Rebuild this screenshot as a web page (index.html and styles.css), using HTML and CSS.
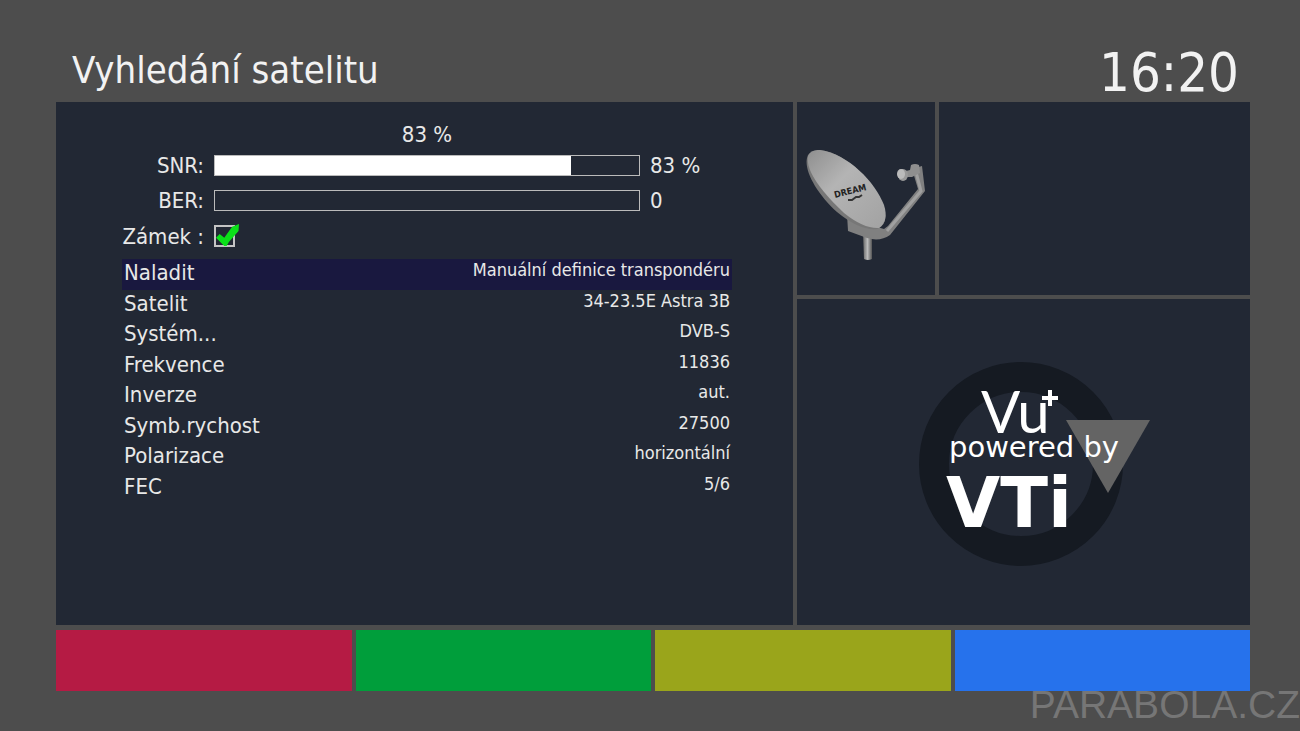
FILE: index.html
```
<!DOCTYPE html>
<html lang="cs">
<head>
<meta charset="utf-8">
<title>Vyhledání satelitu</title>
<meta name="viewport" content="width=device-width">
<link rel="stylesheet" href="styles.css">
</head>
<body>

<header>
	<h1>Vyhledání satelitu</h1>
	<time>16:20</time>
</header>

<main>
	<section class="panel tuner">
		<div class="signal">
			<span class="percent">83 %</span>
			<label for="snr">SNR:</label>
			<progress id="snr" value="84" max="100"></progress>
			<span>83 %</span>
			<label for="ber">BER:</label>
			<progress id="ber" value="0" max="100"></progress>
			<span>0</span>
			<label for="lock">Zámek :</label>
			<input type="checkbox" id="lock" checked>
		</div>
		<table class="settings">
			<tr class="selected"><th>Naladit</th><td>Manuální definice transpondéru</td></tr>
			<tr><th>Satelit</th><td>34-23.5E Astra 3B</td></tr>
			<tr><th>Systém...</th><td>DVB-S</td></tr>
			<tr><th>Frekvence</th><td>11836</td></tr>
			<tr><th>Inverze</th><td>aut.</td></tr>
			<tr><th>Symb.rychost</th><td>27500</td></tr>
			<tr><th>Polarizace</th><td>horizontální</td></tr>
			<tr><th>FEC</th><td>5/6</td></tr>
		</table>
	</section>

	<div class="side">
		<div class="panel dish">
			<svg width="122" height="114" viewBox="0 0 122 114">
				<defs>
					<linearGradient id="plate" x1="0" y1="0" x2="1" y2="1">
						<stop offset="0" stop-color="#8f8f8f"/>
						<stop offset=".4" stop-color="#b4b4b4"/>
						<stop offset="1" stop-color="#a2a2a2"/>
					</linearGradient>
					<linearGradient id="pole">
						<stop offset="0" stop-color="#666"/>
						<stop offset=".5" stop-color="#bbb"/>
						<stop offset="1" stop-color="#555"/>
					</linearGradient>
				</defs>
				<path d="M58 84h9v26q-4 2-8 0z" fill="url(#pole)"/>
				<path d="M42 65L47 71L79 80L83 77L113 40L107 20L117 17L120 42L85 86Q75 93 62 89L43 82Z" fill="#808080"/>
				<path d="M82 82L116 42L111 23" fill="none" stroke="#a0a0a0" stroke-width="3"/>
				<path d="M106 16q4-2 8 0l1 8-8 4-9 0-1-5 8-2z" fill="#8f8f8f"/>
				<ellipse cx="98" cy="26" rx="5" ry="6" fill="#999"/>
				<ellipse cx="96" cy="25" rx="4" ry="5" fill="#bbb"/>
				<path d="M2 9C-1 22 12 45 32 63Q55 82 72 80Q82 77 80 63C76 39 43 3 14 1Q3 2 2 9Z" fill="#777"/>
				<path d="M3 7C0 23 20 46 39 64Q59 80 74 79Q84 72 79 56C70 33 43 5 15 1Q6 0 3 7Z" fill="url(#plate)"/>
				<text class="brand" x="30" y="49" transform="rotate(-14 30 49)">DREAM</text>
				<path d="M43 51l4 0 4-3 3 0 3-2" fill="none" stroke="#333" stroke-width="2"/>
			</svg>
		</div>
		<div class="panel preview"></div>
		<div class="panel logo">
			<svg width="232" height="206" viewBox="0 0 232 206">
				<circle cx="102" cy="103" r="87" fill="none" stroke="#151a22" stroke-width="30"/>
				<path d="M147 59H231L189 132Z" fill="#646464"/>
				<text class="vu" x="62" y="72">Vu</text>
				<path d="M131 29v16M123 37h16" fill="none" stroke="#fff" stroke-width="4"/>
				<text class="powered" x="30" y="96">powered by</text>
				<text class="vti" x="27" y="166">VTi</text>
			</svg>
		</div>
	</div>
</main>

<footer>
	<button class="red" aria-label="Červené"></button>
	<button class="green" aria-label="Zelené"></button>
	<button class="yellow" aria-label="Žluté"></button>
	<button class="blue" aria-label="Modré"></button>
</footer>

<div class="watermark">PARABOLA.CZ</div>

</body>
</html>
```
FILE: styles.css
```
* {
	box-sizing: border-box;
}
body {
	margin: 0;
	padding: 0 50px 40px 56px;
	min-height: 100vh;
	background: #4d4d4d;
	color: #e8e8e8;
	font-family: "DejaVu Sans Condensed", "DejaVu Sans", sans-serif;
	font-size: 22px;
}
/* header */
header {
	display: flex;
	justify-content: space-between;
	align-items: flex-end;
	height: 102px;
	padding: 0 11px 0 16px;
	color: #f2f2f2;
}
h1 {
	margin: 0 0 8px;
	font-size: 38px;
	line-height: 48px;
	font-weight: normal;
}
time {
	font-size: 54px;
	line-height: 58px;
}
/* panels */
main {
	display: grid;
	grid-template-columns: 737fr 453fr;
	gap: 4px;
}
.panel {
	background: #222834;
}
.tuner {
	padding: 18px 61px 122px 66px;
}
.side {
	display: grid;
	grid-template-columns: 138fr 311fr;
	grid-template-rows: 193fr 326fr;
	gap: 4px;
}
/* signal */
.signal {
	display: grid;
	grid-template-columns: 82px 1fr 82px;
	grid-template-rows: 28px 35px 35px 36px;
	column-gap: 10px;
	align-items: center;
	margin-bottom: 5px;
}
.signal label {
	text-align: right;
	white-space: nowrap;
}
.percent {
	grid-column: 1 / 4;
	text-align: center;
}
progress {
	appearance: none;
	display: block;
	width: 100%;
	height: 21px;
	border: 1px solid #bbb;
	background: none;
}
progress::-webkit-progress-bar {
	background: none;
}
progress::-webkit-progress-value {
	background: #fff;
}
input[type=checkbox] {
	appearance: none;
	position: relative;
	width: 21px;
	height: 22px;
	margin: 0;
	border: 2px solid #c4c4c4;
}
input[type=checkbox]:checked::after {
	content: "";
	position: absolute;
	left: 0;
	top: -3px;
	width: 23px;
	height: 22px;
	background: #0be019;
	clip-path: polygon(0 62%, 16% 46%, 36% 62%, 70% 12%, 100% 0, 98% 32%, 56% 82%, 46% 100%, 36% 100%);
}
/* settings */
.settings {
	width: 100%;
	height: 244px;
	border-collapse: collapse;
}
.settings th, .settings td {
	padding: 0 2px;
	vertical-align: top;
}
.settings th {
	font-weight: normal;
	line-height: 28px;
	text-align: left;
}
.settings td {
	font-size: 18px;
	line-height: 22px;
	text-align: right;
}
.selected {
	background: #19183f;
}
/* pictures */
.dish, .logo {
	display: flex;
	align-items: center;
	justify-content: center;
}
.dish {
	padding-top: 14px;
}
.dish svg {
	display: block;
}
.brand {
	font: bold 9px "DejaVu Sans Condensed", sans-serif;
	fill: #222;
}
.logo {
	grid-column: 1 / 3;
	padding: 3px 0 0 23px;
}
.logo text {
	fill: #fff;
}
.logo .vu {
	font-family: Lato, sans-serif;
	font-size: 58px;
}
.logo .powered {
	font-family: "DejaVu Sans", sans-serif;
	font-size: 29px;
}
.logo .vti {
	font-family: "DejaVu Sans", sans-serif;
	font-size: 70px;
	font-weight: bold;
	font-kerning: none;
}
/* colour keys */
footer {
	display: grid;
	grid-template-columns: repeat(4, 1fr);
	gap: 4px;
	margin-top: 5px;
}
footer button {
	height: 61px;
	border: 0;
}
.red {
	background: #b51b44;
}
.green {
	background: #009e3b;
}
.yellow {
	background: #9aa51b;
}
.blue {
	background: #2672ec;
}
.watermark {
	position: absolute;
	right: 0;
	bottom: 0;
	font: 39px/52px "Liberation Sans", sans-serif;
	color: rgba(160, 160, 160, .5);
}
```
